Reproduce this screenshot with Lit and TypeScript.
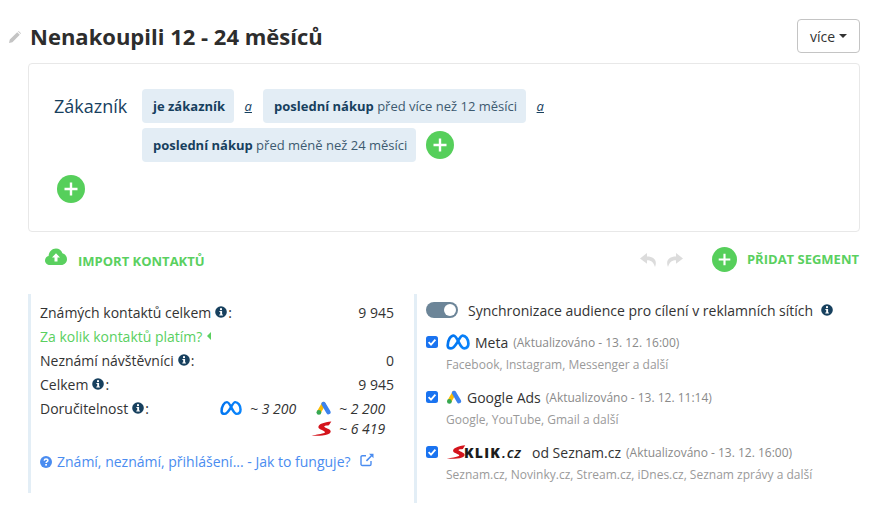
import { LitElement, css, html, svg } from 'lit'
import { customElement } from 'lit/decorators.js'

const infoIcon = html`<svg class="info" viewBox="0 0 12 12"><circle cx="6" cy="6" r="5.800" fill="#17405e"/><rect x="5" y="2.200" width="2" height="1.900" fill="#fff"/><path d="M4.400 5h2.700v3.400h.8v1.100H4.300v-1.100h.9V6h-.8z" fill="#fff"/></svg>`

const plusIcon = html`<svg viewBox="0 0 28 28"><circle cx="14" cy="14" r="14" fill="#56cf5b"/><path d="M14 7.500v13M7.500 14h13" stroke="#fff" stroke-width="2.400"/></svg>`

const metaLogo = svg`<defs><linearGradient id="mg" x1="0" x2="1" y1="0" y2="0.3"><stop offset="0" stop-color="#0072ee"/><stop offset="1" stop-color="#0a84fb"/></linearGradient></defs><path d="M1.700 11.500C1.700 6 4.600 1.600 7.600 1.600 11.500 1.600 13.600 14.400 18.200 14.400 20.900 14.400 22.400 12.400 22.400 9.600 22.400 5 19.600 1.600 16.600 1.600 13 1.600 10.400 14.400 5 14.400 3 14.400 1.700 13.400 1.700 11.500Z" fill="none" stroke="url(#mg)" stroke-width="2.700" stroke-linejoin="round"/>`

const googleLogo = svg`<path d="M7.600 3 3 11" stroke="#fbbc04" stroke-width="4.200" stroke-linecap="round"/><path d="M7.600 3 12.400 11.200" stroke="#3b82ee" stroke-width="4.400" stroke-linecap="round"/><circle cx="2.900" cy="11.400" r="2.400" fill="#34a853"/>`

const sSwoosh = svg`<path d="M0 15.600C5 14.400 11 13.800 13.800 12.500 15.400 11.600 12.500 10.400 9 8.800 6 7.200 7 4.400 10.200 3 13.400 1.600 17.600.8 21 .4L18.400 4.600C16 4.800 13.800 5 13.400 5.800 13 6.600 16 7.400 18.400 8.800 21.400 10.400 20.800 12.800 17.400 14.200 12.600 15.900 5.600 15.900 0 15.600Z" fill="#d4141c"/>`

@customElement('app-root')
export class AppRoot extends LitElement {
  static styles = css`
    :host {
      display: block;
      width: 884px;
      height: 507px;
      overflow: hidden;
      background: #fff;
      font-family: "Open Sans", sans-serif;
      font-size: 14px;
      color: #333;
    }
    svg { display: block; flex: none; }
    .header {
      display: flex;
      align-items: center;
      height: 34px;
      padding: 19px 24px 10px 9px;
    }
    .pencil { width: 12px; height: 12px; margin-right: 9px; margin-top: 2px; }
    h1 {
      margin: 0;
      flex: 1;
      font-size: 22px;
      font-weight: 700;
      line-height: 34px;
      color: #2d2d2d;
    }
    .more {
      display: flex;
      align-items: center;
      gap: 4px;
      box-sizing: border-box;
      width: 63px;
      height: 34px;
      padding-left: 12px;
      border: 1px solid #c4c4c4;
      border-radius: 4px;
      font-size: 14px;
      color: #333;
    }
    .caret { width: 0; height: 0; border: 4px solid transparent; border-top-color: #333; border-bottom: 0; }
    .card {
      box-sizing: border-box;
      height: 169px;
      margin: 0 24px 0 28px;
      padding: 25px 25px 0;
      border: 1px solid #e8e8e8;
      border-radius: 4px;
    }
    .cond { display: flex; }
    .cond-label {
      width: 88px;
      flex: none;
      line-height: 34px;
      font-size: 18px;
      color: #17405e;
    }
    .chips {
      display: flex;
      flex-wrap: wrap;
      align-items: center;
      row-gap: 5px;
      width: 500px;
    }
    .chip {
      height: 34px;
      padding: 0 8.500px 0 11px;
      border-radius: 4px;
      background: #e3edf5;
      line-height: 35px;
      font-size: 13px;
      color: #3d5a70;
      white-space: nowrap;
    }
    .chip b { color: #17405e; font-weight: 700; }
    .and {
      width: 29.500px;
      text-align: center;
      font-size: 13px;
      font-style: italic;
      text-decoration: underline;
      color: #17405e;
    }
    .plus { width: 28px; height: 28px; }
    .chips .plus { margin-left: 10px; }
    .card > .plus { margin: 13px 0 0 3px; }
    .toolbar {
      display: flex;
      align-items: center;
      height: 25px;
      margin: 15px 25px 0 45px;
      color: #5ad05f;
      font-size: 13px;
      font-weight: 700;
      text-transform: uppercase;
    }
    .cloud { width: 22px; height: 18px; margin: -5px 11px 0 0; }
    .import { margin-top: 3px; }
    .spacer { flex: 1; }
    .hist { width: 17px; height: 14px; margin-right: 9px; }
    .toolbar .plus { width: 25px; height: 25px; margin: 0 10px 0 20px; }
    .add-label { margin-top: -1px; }
    .panels {
      display: flex;
      margin: 22px 0 0 28px;
    }
    .stats {
      box-sizing: border-box;
      width: 386px;
      height: 199px;
      padding: 6px 20px 0 9px;
      border-left: 3px solid #e3eef6;
    }
    .row {
      display: flex;
      align-items: center;
      justify-content: space-between;
      height: 24px;
    }
    .label { display: flex; align-items: center; }
    .info { width: 12px; height: 12px; margin: 0 1px 0 4px; }
    .promo { color: #5ad05f; }
    .promo-caret {
      display: inline-block;
      margin-left: 5px;
      border: 4px solid transparent;
      border-right-color: #5ad05f;
      border-left: 0;
    }
    .reach {
      display: grid;
      grid-template-columns: 30px 61px 28px 47px;
      grid-auto-rows: 20px;
      align-items: center;
      width: 166px;
      margin: -22px 8px 0 180px;
      font-style: italic;
      font-size: 14px;
      color: #333;
    }
    .reach .g { margin-left: 5px; }
    .link {
      display: flex;
      align-items: center;
      margin-top: 14px;
      color: #4a8cf0;
    }
    .link .q { width: 12px; height: 12px; margin-right: 5px; }
    .link .ext { width: 14px; height: 14px; margin-left: 9px; margin-top: -3px; }
    .audience {
      box-sizing: border-box;
      height: 209px;
      padding: 6px 0 0 9px;
      border-left: 3px solid #e3eef6;
    }
    .sync { display: flex; align-items: center; height: 20px; margin-bottom: 8px; }
    .toggle {
      box-sizing: border-box;
      display: flex;
      justify-content: flex-end;
      align-items: center;
      width: 32px;
      height: 16px;
      padding: 0 2px;
      margin-right: 10px;
      border-radius: 8px;
      background: #6c8598;
    }
    .toggle i { width: 12px; height: 12px; border-radius: 50%; background: #fff; }
    .sync .info { margin-left: 8px; }
    .net { margin-bottom: 10px; }
    .net-head { display: flex; align-items: center; height: 28px; }
    .check {
      width: 12px;
      height: 12px;
      margin-right: 8px;
      border-radius: 2.500px;
      background: #1a73f0;
    }
    .net-head span { margin-left: 5px; }
    .muted { color: #8a8a8a; font-size: 12px; }
    .net-sub { height: 16px; line-height: 16px; margin: 1px 0 0 20px; color: #9a9a9a; font-size: 12px; }
    .sklik { display: flex; align-items: baseline; width: 81px; }
    .sklik svg { align-self: center; }
    .sklik b {
      margin-left: -2px;
      font-size: 14px;
      font-weight: 800;
      letter-spacing: 1.200px;
      color: #1c1c1c;
    }
    .sklik em {
      margin-left: 1px;
      font-size: 15px;
      font-weight: 600;
      letter-spacing: 0.600px;
      color: #1c1c1c;
    }
  `

  private check() {
    return html`<svg class="check" viewBox="0 0 12 12"><path d="M2.600 6.200 5 8.600 9.400 3.600" fill="none" stroke="#fff" stroke-width="1.800"/></svg>`
  }

  render() {
    return html`
      <div class="header">
        <svg class="pencil" viewBox="0 0 12 12"><path d="M0 12 .8 8.600 8.200 1.200 10.800 3.800 3.400 11.200ZM9 .5 9.600 0 12 2.300 11.500 3Z" fill="#c4c4c4"/></svg>
        <h1>Nenakoupili 12 - 24 měsíců</h1>
        <div class="more">více <span class="caret"></span></div>
      </div>

      <div class="card">
        <div class="cond">
          <div class="cond-label">Zákazník</div>
          <div class="chips">
            <div class="chip"><b>je zákazník</b></div>
            <div class="and">a</div>
            <div class="chip"><b>poslední nákup</b> před více než 12 měsíci</div>
            <div class="and">a</div>
            <div class="chip"><b>poslední nákup</b> před méně než 24 měsíci</div>
            <div class="plus">${plusIcon}</div>
          </div>
        </div>
        <div class="plus">${plusIcon}</div>
      </div>

      <div class="toolbar">
        <svg class="cloud" viewBox="0 0 22 18"><path d="M5 17C2.200 17 0 15 0 12.400 0 10.200 1.500 8.400 3.600 7.900 3.900 3.800 7 .5 11 .5 14 .5 16.500 2.400 17.400 5.200 20 5.900 22 8.200 22 11.200 22 14.400 19.400 17 16.200 17Z" fill="#5ad05f"/><path d="M11 5.200 15 9.600H12.500V13.600H9.500V9.600H7Z" fill="#fff"/></svg>
        <span class="import">Import kontaktů</span>
        <div class="spacer"></div>
        <svg class="hist" viewBox="0 0 17 14"><path d="M7 0 0 5.400 7 10.800V7.200C10.500 7.200 13.500 8.400 15 14 17.600 7.600 14 3.600 7 3.600Z" fill="#dcdcdc"/></svg>
        <svg class="hist" viewBox="0 0 17 14"><path d="M10 0 17 5.400 10 10.800V7.200C6.500 7.200 3.500 8.400 2 14-.6 7.600 3 3.600 10 3.600Z" fill="#dcdcdc"/></svg>
        <div class="plus">${plusIcon}</div>
        <span class="add-label">Přidat segment</span>
      </div>

      <div class="panels">
        <div class="stats">
          <div class="row"><div class="label">Známých kontaktů celkem ${infoIcon}:</div><div>9 945</div></div>
          <div class="row"><div class="label promo">Za kolik kontaktů platím?<i class="promo-caret"></i></div></div>
          <div class="row"><div class="label">Neznámí návštěvníci ${infoIcon}:</div><div>0</div></div>
          <div class="row"><div class="label">Celkem ${infoIcon}:</div><div>9 945</div></div>
          <div class="row"><div class="label">Doručitelnost ${infoIcon}:</div></div>
          <div class="reach">
            <svg width="22" height="16" viewBox="0 0 24 16">${metaLogo}</svg><div>~ 3 200</div>
            <svg class="g" width="15" height="15" viewBox="0 0 15 15">${googleLogo}</svg><div>~ 2 200</div>
            <div></div><div></div>
            <svg width="21" height="15" viewBox="0 0 21 16">${sSwoosh}</svg><div>~ 6 419</div>
          </div>
          <div class="link">
            <svg class="q" viewBox="0 0 12 12"><circle cx="6" cy="6" r="6" fill="#4a8cf0"/><path d="M4.200 4.600C4.300 3.600 5 3 6 3 7.100 3 7.900 3.600 7.900 4.500 7.900 5.700 6.100 5.700 6.100 7.100" fill="none" stroke="#fff" stroke-width="1.500"/><rect x="5.200" y="8" width="1.800" height="1.600" fill="#fff"/></svg>
            Známí, neznámí, přihlášení... - Jak to funguje?
            <svg class="ext" viewBox="0 0 14 14"><path d="M11 8v3.200a1.300 1.300 0 0 1-1.300 1.300H2.300A1.300 1.300 0 0 1 1 11.200V4a1.300 1.300 0 0 1 1.300-1.300H6" fill="none" stroke="#4a8cf0" stroke-width="1.400"/><path d="M9 .8h4.500v4.500L11.800 3.600 7 8.400 5.900 7.300 10.700 2.500Z" fill="#4a8cf0"/></svg>
          </div>
        </div>

        <div class="audience">
          <div class="sync">
            <div class="toggle"><i></i></div>
            Synchronizace audience pro cílení v reklamních sítích ${infoIcon}
          </div>

          <div class="net">
            <div class="net-head">
              ${this.check()}
              <svg width="24" height="16" viewBox="0 0 24 16">${metaLogo}</svg>
              <span>Meta</span>
              <span class="muted">(Aktualizováno - 13. 12. 16:00)</span>
            </div>
            <div class="net-sub">Facebook, Instagram, Messenger a další</div>
          </div>

          <div class="net">
            <div class="net-head">
              ${this.check()}
              <svg width="16" height="15" viewBox="0 0 15 15">${googleLogo}</svg>
              <span>Google Ads</span>
              <span class="muted">(Aktualizováno - 13. 12. 11:14)</span>
            </div>
            <div class="net-sub">Google, YouTube, Gmail a další</div>
          </div>

          <div class="net">
            <div class="net-head">
              ${this.check()}
              <div class="sklik">
                <svg width="20" height="14" viewBox="0 0 21 16">${sSwoosh}</svg>
                <b>KLIK</b><em>.cz</em>
              </div>
              <span>od Seznam.cz</span>
              <span class="muted">(Aktualizováno - 13. 12. 16:00)</span>
            </div>
            <div class="net-sub">Seznam.cz, Novinky.cz, Stream.cz, iDnes.cz, Seznam zprávy a další</div>
          </div>
        </div>
      </div>
    `
  }
}
